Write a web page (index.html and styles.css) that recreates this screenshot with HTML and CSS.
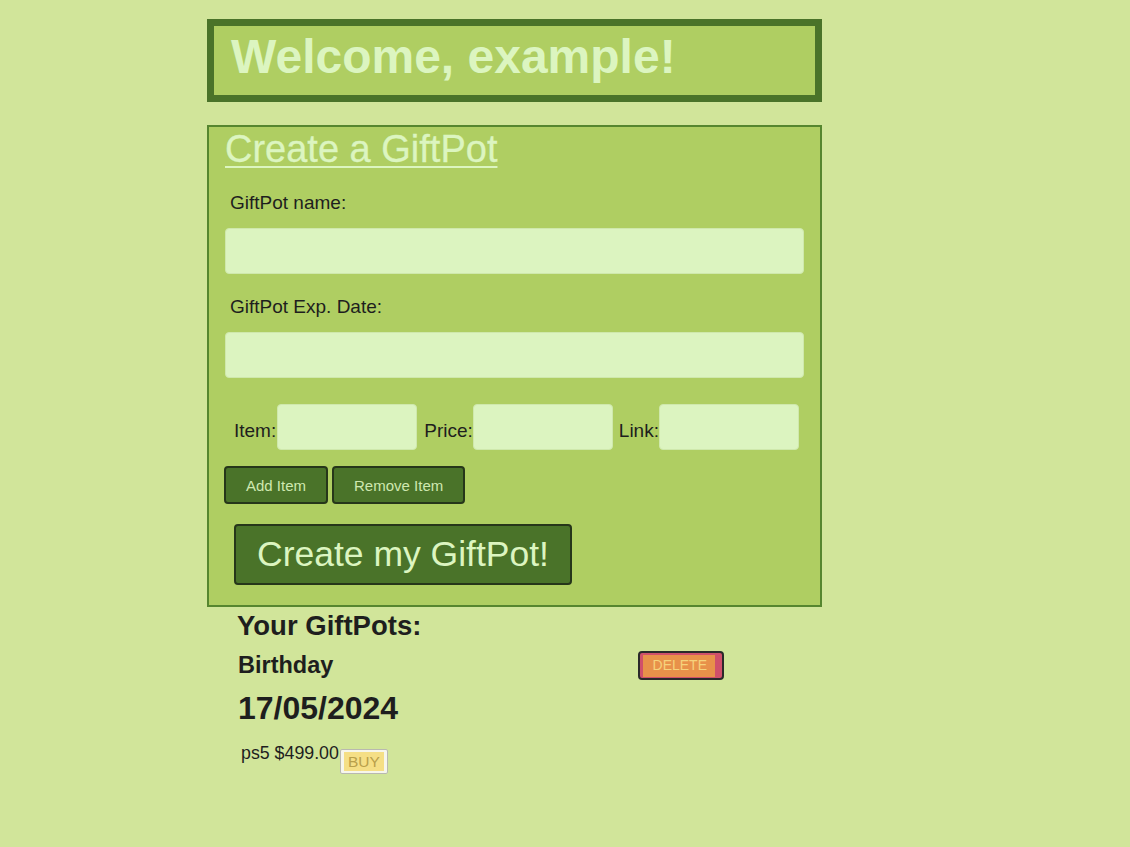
FILE: index.html
```html
<!DOCTYPE html>
<html lang="en">
<head>
<meta charset="utf-8">
<title>GiftPot</title>
<link rel="stylesheet" href="styles.css">
</head>
<body>
<div class="page">
  <header class="welcome">
    <h1>Welcome, example!</h1>
  </header>

  <form class="create">
    <h2>Create a GiftPot</h2>
    <label class="field-label" for="name">GiftPot name:</label>
    <input class="wide" id="name" type="text">
    <label class="field-label second" for="date">GiftPot Exp. Date:</label>
    <input class="wide" id="date" type="text">

    <div class="item-row">
      <label class="item-label first">Item:</label><input class="small" type="text">
      <label class="item-label">Price:</label><input class="small" type="text">
      <label class="item-label last">Link:</label><input class="small" type="text">
    </div>

    <div class="item-buttons">
      <button type="button" class="btn">Add Item</button>
      <button type="button" class="btn">Remove Item</button>
    </div>

    <button type="button" class="btn big">Create my GiftPot!</button>
  </form>

  <section class="pots">
    <h3>Your GiftPots:</h3>
    <div class="pot-head">
      <h4>Birthday</h4>
      <button type="button" class="delete"><span>DELETE</span></button>
    </div>
    <div class="pot-date">17/05/2024</div>
    <div class="pot-item">
      <span class="item-text">ps5 $499.00</span>
      <button type="button" class="buy"><span>BUY</span></button>
    </div>
  </section>
</div>
</body>
</html>
```

FILE: styles.css
```css
* { box-sizing: border-box; }

html, body {
  margin: 0;
  padding: 0;
  background: #d1e59a;
  font-family: "Liberation Sans", Arial, sans-serif;
  color: #1e1e1e;
}

.page {
  margin-left: 207px;
  width: 615px;
  padding-top: 19px;
}

.welcome {
  background: #afce62;
  border: 7px solid #4a7329;
  height: 83px;
}

.welcome h1 {
  margin: 0;
  padding: 3px 0 0 17px;
  font-size: 48px;
  line-height: 55px;
  font-weight: bold;
  color: #dcf5c0;
}

.create {
  margin-top: 23px;
  background: #afce62;
  border: 2px solid #56862f;
  padding: 0 16px 20px 16px;
  display: flex;
  flex-direction: column;
  align-items: flex-start;
}

.create h2 {
  margin: 0;
  font-size: 38px;
  font-weight: normal;
  color: #dcf5c0;
  text-decoration: underline;
  text-decoration-thickness: 2px;
  text-underline-offset: 4px;
  line-height: 44px;
  -webkit-text-stroke: 0.3px #dcf5c0;
}

.field-label {
  display: block;
  margin-top: 21px;
  padding-left: 5px;
  font-size: 19px;
  line-height: 22px;
}

.field-label.second { margin-top: 22px; }

input {
  background: #dcf4c0;
  border: 1px solid #cfe8ac;
  border-radius: 4px;
  font-family: inherit;
  font-size: 16px;
  outline: none;
  padding: 0 6px;
}

input.wide {
  margin-top: 14px;
  width: 579px;
  height: 46px;
}

.item-row {
  margin-top: 26px;
  display: flex;
  align-items: flex-end;
  padding-left: 9px;
}

.item-label {
  font-size: 19px;
  line-height: 22px;
  padding-bottom: 8px;
  margin-left: 7px;
}

.item-label.first { margin-left: 0; padding-right: 1px; }
.item-label.last { margin-left: 6px; }

input.small {
  width: 140px;
  height: 46px;
}

.item-buttons {
  margin-top: 16px;
  margin-left: -1px;
  display: flex;
  gap: 4px;
}

.btn {
  font-family: inherit;
  background: #4a7329;
  color: #cfe8b0;
  border: 2px solid #26361a;
  border-radius: 4px;
  font-size: 15px;
  height: 38px;
  padding: 0 20px;
  cursor: pointer;
}

.btn.big {
  margin-top: 20px;
  margin-left: 9px;
  height: 61px;
  font-size: 35.5px;
  padding: 0 21px;
  color: #dcf5c0;
}

.pots {
  padding-left: 30px;
}

.pots h3 {
  margin: 3px 0 0 0;
  font-size: 27.5px;
  line-height: 31px;
  font-weight: bold;
}

.pot-head {
  margin-top: 9px;
  width: 487px;
  display: flex;
  justify-content: space-between;
  align-items: center;
}

.pot-head h4 {
  margin: 0 0 0 1px;
  font-size: 23.5px;
  line-height: 30px;
  font-weight: bold;
}

.delete {
  font-family: inherit;
  background: #d0506a;
  border: 2px solid #2a2a2a;
  border-radius: 4px;
  padding: 2px 7px 1px 3px;
  height: 29px;
  cursor: pointer;
  display: flex;
  align-items: stretch;
}

.delete span {
  display: block;
  background: #e8914a;
  color: #f6d27c;
  font-size: 14px;
  line-height: 21px;
  padding: 0 8px 0 10px;
}

.pot-date {
  margin-top: 10px;
  margin-left: 1px;
  font-size: 32px;
  line-height: 37px;
  font-weight: bold;
}

.pot-item {
  margin-top: 16px;
  margin-left: 4px;
  display: flex;
  align-items: flex-start;
}

.item-text {
  font-size: 17.8px;
  line-height: 20px;
}

.buy {
  font-family: inherit;
  margin-top: 6px;
  margin-left: 1px;
  width: 48px;
  height: 25px;
  padding: 2px 3px;
  background: #f6f6ec;
  border: 1px solid #b9b9b0;
  border-radius: 2px;
  cursor: pointer;
  display: flex;
  align-items: stretch;
}

.buy span {
  display: block;
  flex: 1;
  background: #f5df86;
  color: #b9a04a;
  font-size: 15.5px;
  line-height: 19px;
  text-align: center;
}
```
